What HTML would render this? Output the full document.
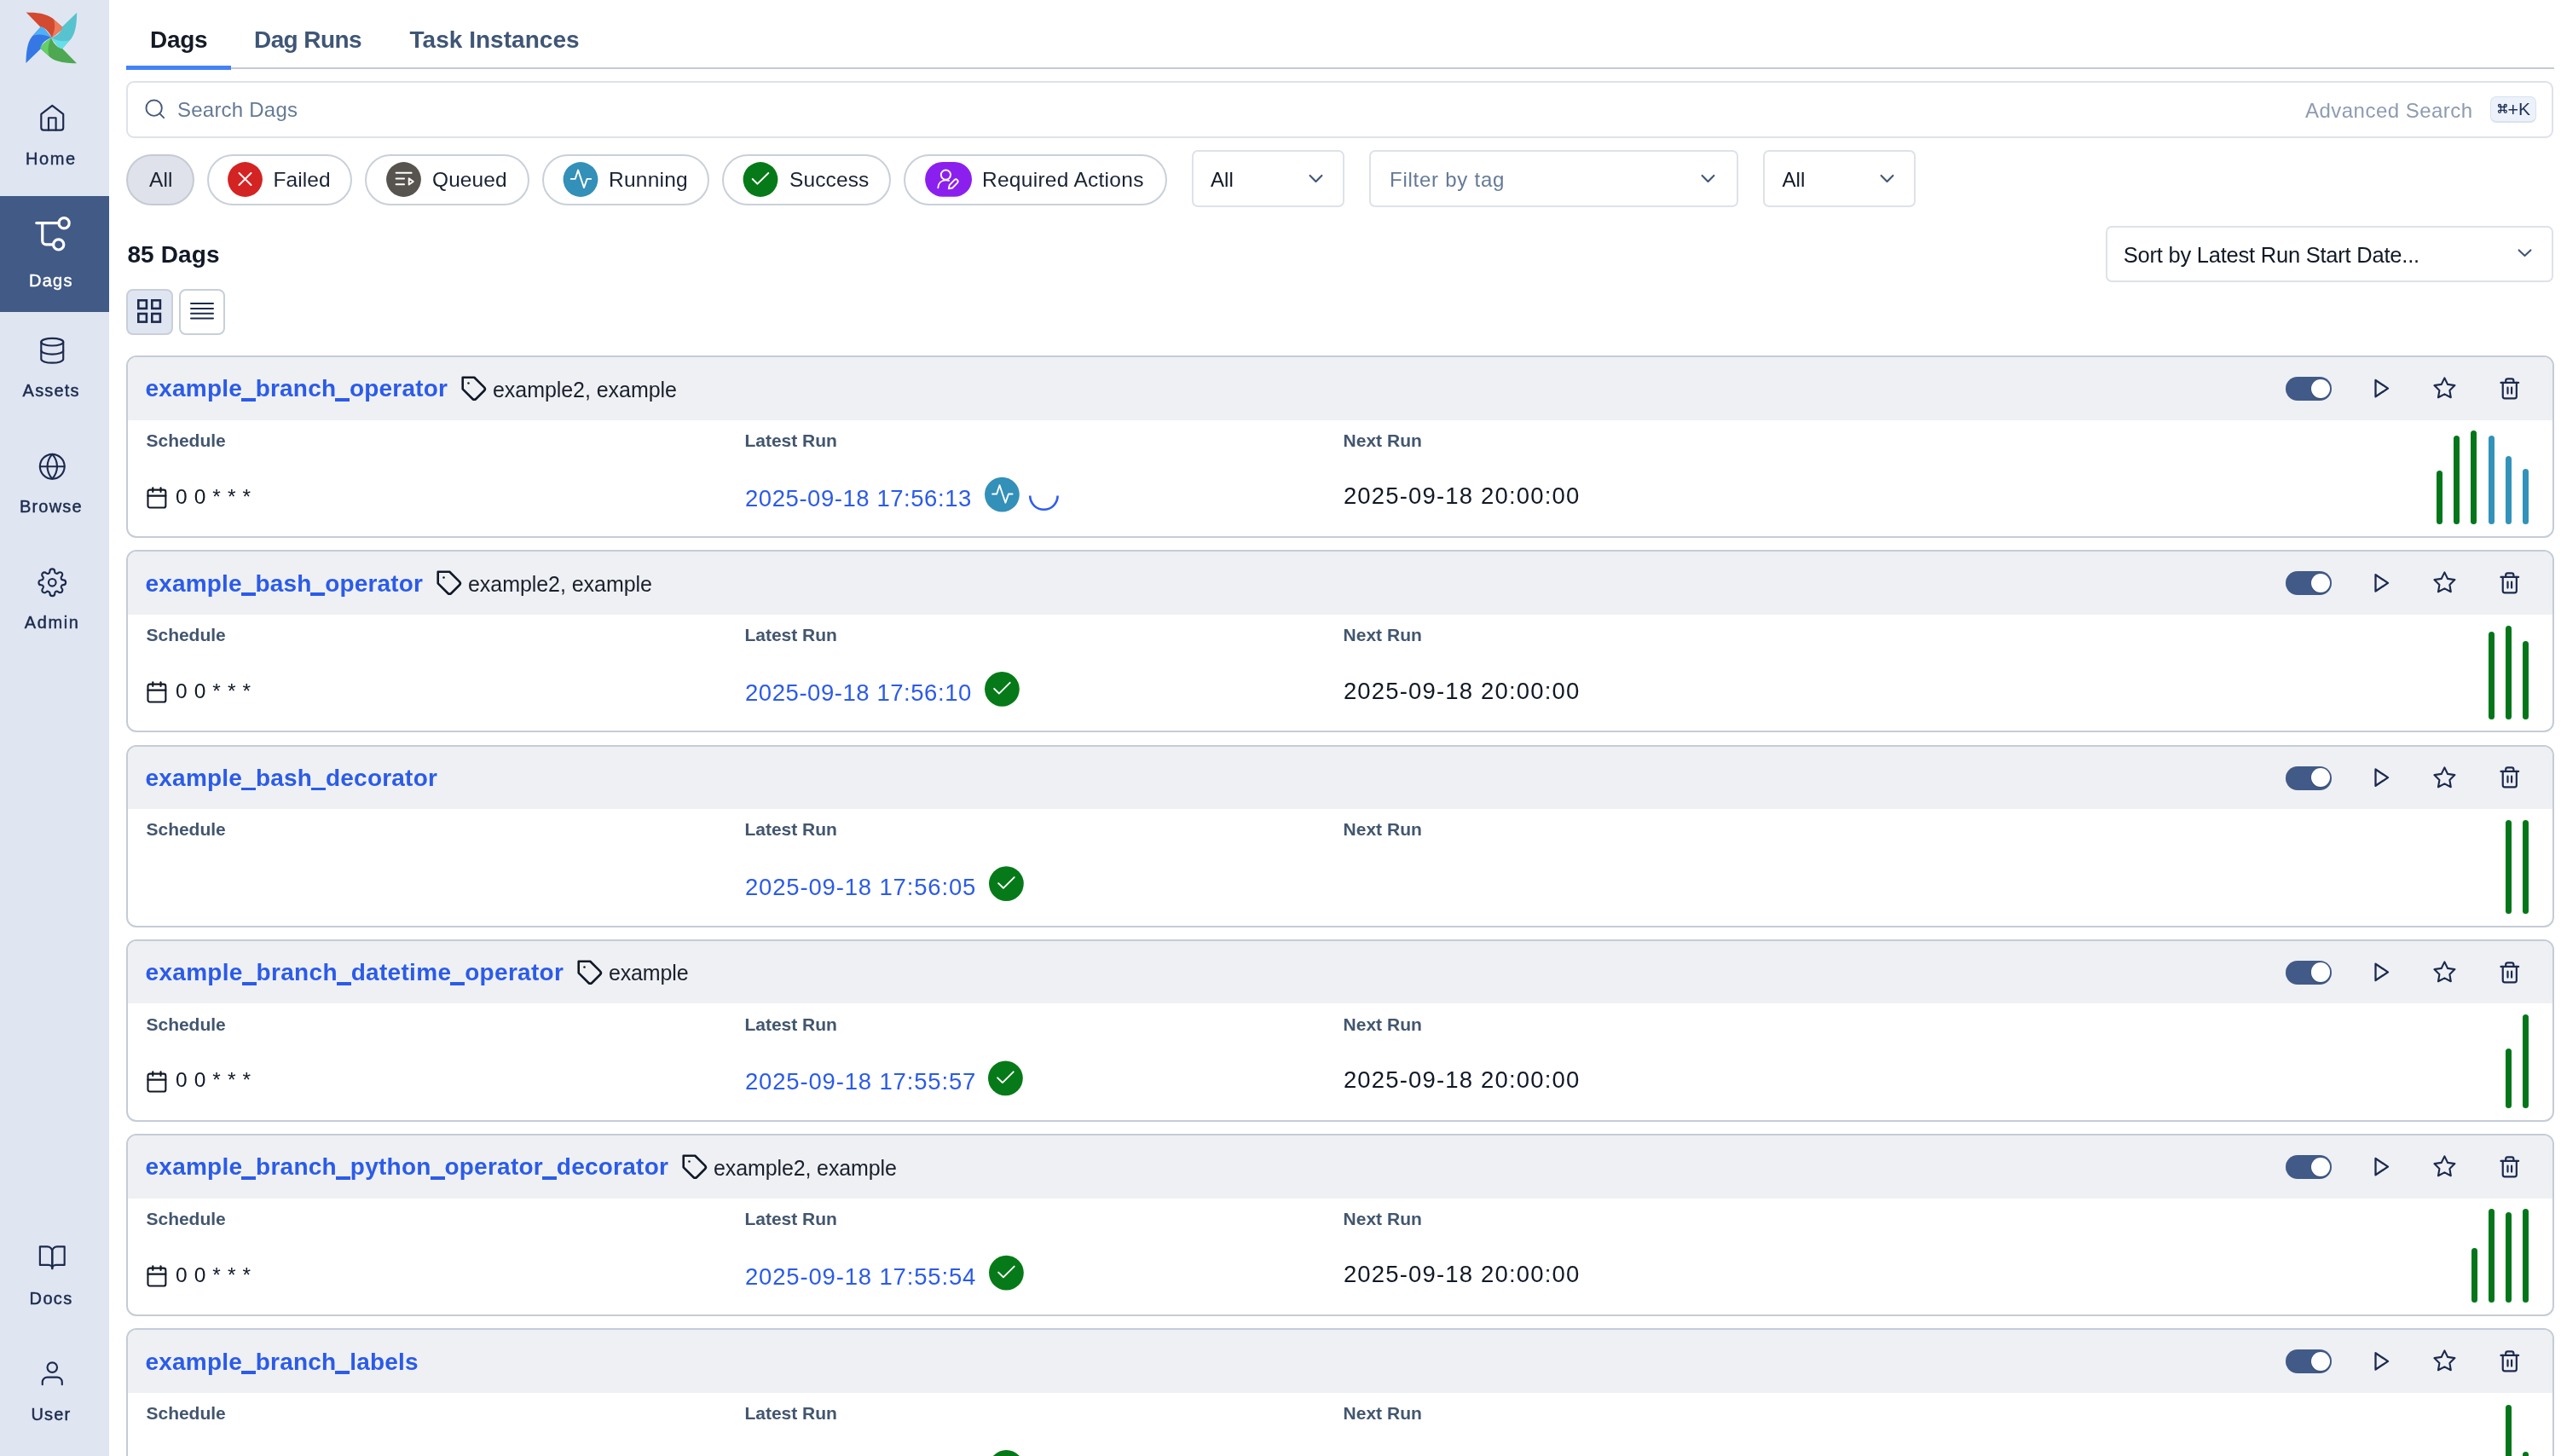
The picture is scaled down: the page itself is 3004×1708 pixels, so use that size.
<!DOCTYPE html>
<html><head><meta charset="utf-8"><style>
html,body{margin:0;padding:0;}
body{width:3004px;height:1708px;overflow:hidden;position:relative;background:#fff;font-family:"Liberation Sans",sans-serif;}
</style></head><body>
<div style="position:absolute;left:0px;top:0px;width:128px;height:1708px;background:#dfe6f2"></div>
<div style="position:absolute;left:0px;top:230px;width:128px;height:135.5px;background:#415a86"></div>
<svg style="position:absolute;left:26px;top:10px;overflow:visible;" width="68" height="68" viewBox="0 0 1456 1456"><g transform="rotate(0 735 735)"><path d="M100,95 C350,100 600,120 760,240 L1005,460 L1000,525 C900,620 800,690 740,735 C700,620 600,500 500,465 L460,465 Z" fill="#d24a2f"/><path d="M790,280 L1005,460 L1000,525 C900,620 800,690 740,735 C820,560 840,420 790,280 Z" fill="#ee7b5c"/></g><g transform="rotate(90 735 735)"><path d="M100,95 C350,100 600,120 760,240 L1005,460 L1000,525 C900,620 800,690 740,735 C700,620 600,500 500,465 L460,465 Z" fill="#57c3cf"/><path d="M790,280 L1005,460 L1000,525 C900,620 800,690 740,735 C820,560 840,420 790,280 Z" fill="#66dfea"/></g><g transform="rotate(180 735 735)"><path d="M100,95 C350,100 600,120 760,240 L1005,460 L1000,525 C900,620 800,690 740,735 C700,620 600,500 500,465 L460,465 Z" fill="#4ea852"/><path d="M790,280 L1005,460 L1000,525 C900,620 800,690 740,735 C820,560 840,420 790,280 Z" fill="#63d067"/></g><g transform="rotate(270 735 735)"><path d="M100,95 C350,100 600,120 760,240 L1005,460 L1000,525 C900,620 800,690 740,735 C700,620 600,500 500,465 L460,465 Z" fill="#3578e5"/><path d="M790,280 L1005,460 L1000,525 C900,620 800,690 740,735 C820,560 840,420 790,280 Z" fill="#4fb1f5"/></g></svg>
<svg style="position:absolute;left:43.9px;top:121.4px;overflow:visible;" width="34.56" height="34.56" viewBox="0 0 24 24"><g fill="none" stroke="#1c2a4d" stroke-width="1.5" stroke-linecap="round" stroke-linejoin="round"><path d="M3 9l9-7 9 7v11a2 2 0 0 1-2 2H5a2 2 0 0 1-2-2z"/><polyline points="9 22 9 12 15 12 15 22"/></g></svg>
<svg style="position:absolute;left:43.9px;top:394.3px;overflow:visible;" width="34.56" height="34.56" viewBox="0 0 24 24"><g fill="none" stroke="#1c2a4d" stroke-width="1.5" stroke-linecap="round" stroke-linejoin="round"><ellipse cx="12" cy="5" rx="9" ry="3"/><path d="M21 12c0 1.66-4 3-9 3s-9-1.34-9-3"/><path d="M3 5v14c0 1.66 4 3 9 3s9-1.34 9-3V5"/></g></svg>
<svg style="position:absolute;left:43.7px;top:529.6px;overflow:visible;" width="34.56" height="34.56" viewBox="0 0 24 24"><g fill="none" stroke="#1c2a4d" stroke-width="1.5" stroke-linecap="round" stroke-linejoin="round"><circle cx="12" cy="12" r="10"/><line x1="2" y1="12" x2="22" y2="12"/><path d="M12 2a15.3 15.3 0 0 1 4 10 15.3 15.3 0 0 1-4 10 15.3 15.3 0 0 1-4-10 15.3 15.3 0 0 1 4-10z"/></g></svg>
<svg style="position:absolute;left:43.7px;top:665.6px;overflow:visible;" width="34.56" height="34.56" viewBox="0 0 24 24"><g fill="none" stroke="#1c2a4d" stroke-width="1.5" stroke-linecap="round" stroke-linejoin="round"><circle cx="12" cy="12" r="3"/><path d="M19.4 15a1.65 1.65 0 0 0 .33 1.82l.06.06a2 2 0 0 1 0 2.83 2 2 0 0 1-2.83 0l-.06-.06a1.650 1.650 0 0 0-1.82-.33 1.65 1.65 0 0 0-1 1.51V21a2 2 0 0 1-2 2 2 2 0 0 1-2-2v-.09A1.65 1.65 0 0 0 9 19.4a1.65 1.65 0 0 0-1.82.33l-.06.06a2 2 0 0 1-2.83 0 2 2 0 0 1 0-2.83l.06-.06a1.65 1.65 0 0 0 .33-1.82 1.65 1.65 0 0 0-1.51-1H3a2 2 0 0 1-2-2 2 2 0 0 1 2-2h.09A1.65 1.65 0 0 0 4.6 9a1.65 1.65 0 0 0-.33-1.82l-.06-.06a2 2 0 0 1 0-2.83 2 2 0 0 1 2.83 0l.06.06a1.65 1.65 0 0 0 1.82.33H9a1.65 1.65 0 0 0 1-1.51V3a2 2 0 0 1 2-2 2 2 0 0 1 2 2v.09a1.65 1.65 0 0 0 1 1.51 1.65 1.65 0 0 0 1.82-.33l.06-.06a2 2 0 0 1 2.83 0 2 2 0 0 1 0 2.83l-.06.06a1.65 1.65 0 0 0-.33 1.82V9a1.65 1.65 0 0 0 1.51 1H21a2 2 0 0 1 2 2 2 2 0 0 1-2 2h-.09a1.65 1.65 0 0 0-1.51 1z"/></g></svg>
<svg style="position:absolute;left:43.9px;top:1457.5px;overflow:visible;" width="34.56" height="34.56" viewBox="0 0 24 24"><g fill="none" stroke="#1c2a4d" stroke-width="1.5" stroke-linecap="round" stroke-linejoin="round"><path d="M2 3h6a4 4 0 0 1 4 4v14a3 3 0 0 0-3-3H2z"/><path d="M22 3h-6a4 4 0 0 0-4 4v14a3 3 0 0 1 3-3h7z"/></g></svg>
<svg style="position:absolute;left:43.7px;top:1593.8px;overflow:visible;" width="34.56" height="34.56" viewBox="0 0 24 24"><g fill="none" stroke="#1c2a4d" stroke-width="1.5" stroke-linecap="round" stroke-linejoin="round"><path d="M20 21v-2a4 4 0 0 0-4-4H8a4 4 0 0 0-4 4v2"/><circle cx="12" cy="7" r="4"/></g></svg>
<svg style="position:absolute;left:0px;top:0px;overflow:visible;" width="128" height="400" viewBox="0 0 128 400"><g fill="none" stroke="#fff" stroke-width="3.2" stroke-linecap="round"><path d="M42.8 261.6 H69"/><path d="M49.75 261.6 V282.5 a4.3 4.3 0 0 0 4.3 4.3 H62.6"/><circle cx="75.1" cy="261.75" r="6.1"/><circle cx="68.7" cy="286.9" r="6.1"/></g></svg>
<div style="position:absolute;left:148px;top:79px;width:2848px;height:2px;background:#c5cbd4"></div>
<div style="position:absolute;left:148px;top:77px;width:123px;height:5px;background:#4682f7"></div>
<div style="position:absolute;left:148px;top:95px;width:2847px;height:67px;box-sizing:border-box;border:2px solid #dde2ea;border-radius:9px;background:#fff"></div>
<svg style="position:absolute;left:168.05px;top:113.95px;overflow:visible;" width="27.6" height="27.6" viewBox="0 0 24 24"><g fill="none" stroke="#46597a" stroke-width="1.65" stroke-linecap="round"><circle cx="11" cy="11" r="8"/><path d="m21 21-4.3-4.3"/></g></svg>
<div style="position:absolute;left:2921px;top:113px;width:53.5px;height:30.8px;box-sizing:border-box;border:1.5px solid #d9e2ef;border-bottom-width:2.5px;border-radius:7px;background:#edf2fa"></div>
<svg style="position:absolute;left:0px;top:0px;overflow:visible;" width="10" height="10" viewBox="0 0 10 10"><g fill="none" stroke="#1f2f57" stroke-width="1.3"><path d="M2932.0 125.5 H2938.8 M2932.0 129.3 H2938.8 M2933.5 124.0 V130.8 M2937.3 124.0 V130.8"/><circle cx="2932.0" cy="124.0" r="1.5"/><circle cx="2932.0" cy="130.8" r="1.5"/><circle cx="2938.8" cy="124.0" r="1.5"/><circle cx="2938.8" cy="130.8" r="1.5"/></g></svg>
<div style="position:absolute;left:148px;top:180.5px;width:79.5px;height:60px;box-sizing:border-box;border:2px solid #c5cad3;border-radius:30px;background:#dfe2ea"></div>
<div style="position:absolute;left:242.5px;top:180.5px;width:170.5px;height:60px;box-sizing:border-box;border:2px solid #c9d0da;border-radius:30px;background:#fff"></div>
<div style="position:absolute;left:427.5px;top:180.5px;width:193.0px;height:60px;box-sizing:border-box;border:2px solid #c9d0da;border-radius:30px;background:#fff"></div>
<div style="position:absolute;left:635.5px;top:180.5px;width:196.0px;height:60px;box-sizing:border-box;border:2px solid #c9d0da;border-radius:30px;background:#fff"></div>
<div style="position:absolute;left:846.5px;top:180.5px;width:198.5px;height:60px;box-sizing:border-box;border:2px solid #c9d0da;border-radius:30px;background:#fff"></div>
<div style="position:absolute;left:1059.5px;top:180.5px;width:309.5px;height:60px;box-sizing:border-box;border:2px solid #c9d0da;border-radius:30px;background:#fff"></div>
<svg style="position:absolute;left:0px;top:0px;overflow:visible;" width="10" height="10" viewBox="0 0 10 10"><circle cx="287.5" cy="210.5" r="20.4" fill="#d42323"/><g fill="none" stroke="#fff" stroke-width="1.9" stroke-linecap="round" stroke-linejoin="round"><path d="M280.5 203.0 L294.5 217.0 M294.5 203.0 L280.5 217.0"/></g></svg>
<svg style="position:absolute;left:0px;top:0px;overflow:visible;" width="10" height="10" viewBox="0 0 10 10"><circle cx="473.5" cy="210.5" r="20.4" fill="#57534e"/><g fill="none" stroke="#fff" stroke-width="1.9" stroke-linecap="round" stroke-linejoin="round"><path d="M464.6 202.8 H482.7 M464.6 209.5 H474.1 M464.6 216.2 H474.1"/><path d="M479.7 209.3 L484.8 212.95 L479.7 216.6 Z"/></g></svg>
<svg style="position:absolute;left:0px;top:0px;overflow:visible;" width="10" height="10" viewBox="0 0 10 10"><circle cx="681" cy="210.5" r="20.4" fill="#3390b8"/><g fill="none" stroke="#fff" stroke-width="1.9" stroke-linecap="round" stroke-linejoin="round"><path d="M669.7 209.9 H674.7 L678.1 199.6 L685 220.1 L688.6 209.9 H693.2"/></g></svg>
<svg style="position:absolute;left:0px;top:0px;overflow:visible;" width="10" height="10" viewBox="0 0 10 10"><circle cx="892" cy="210.5" r="20.4" fill="#067a18"/><g fill="none" stroke="#fff" stroke-width="1.9" stroke-linecap="round" stroke-linejoin="round"><path d="M882.7 210.0 L888.5 215.7 L901.3 203.0"/></g></svg>
<svg style="position:absolute;left:0px;top:0px;overflow:visible;" width="10" height="10" viewBox="0 0 10 10"><rect x="1085.1" y="190" width="54.9" height="40.8" rx="20.4" fill="#8b20ee"/><g fill="none" stroke="#fff" stroke-width="1.9" stroke-linecap="round" stroke-linejoin="round"><circle cx="1109.4" cy="205.1" r="5.6"/><path d="M1100.3 220.3 C1100.6 214.5 1104.5 211.4 1109.5 211.4 C1111 211.4 1112 211.6 1113 211.9"/><path d="M1112.8 221.4 L1113.7 217.1 L1119.5 211.2 A2.4 2.4 0 0 1 1122.9 214.6 L1117.1 220.5 Z"/></g></svg>
<div style="position:absolute;left:1397.5px;top:176px;width:179.5px;height:67px;box-sizing:border-box;border:2px solid #dde2ea;border-radius:7px;background:#fff"></div>
<svg style="position:absolute;left:0px;top:0px;overflow:visible;" width="10" height="10" viewBox="0 0 10 10"><path d="M1536.6 205.9 L1543.5 212.9 L1550.4 205.9" fill="none" stroke="#3f5575" stroke-width="2.1" stroke-linecap="round" stroke-linejoin="round"/></svg>
<div style="position:absolute;left:1605.5px;top:176px;width:433.29999999999995px;height:67px;box-sizing:border-box;border:2px solid #dde2ea;border-radius:7px;background:#fff"></div>
<svg style="position:absolute;left:0px;top:0px;overflow:visible;" width="10" height="10" viewBox="0 0 10 10"><path d="M1996.6 205.9 L2003.5 212.9 L2010.4 205.9" fill="none" stroke="#3f5575" stroke-width="2.1" stroke-linecap="round" stroke-linejoin="round"/></svg>
<div style="position:absolute;left:2067.6px;top:176px;width:179.4000000000001px;height:67px;box-sizing:border-box;border:2px solid #dde2ea;border-radius:7px;background:#fff"></div>
<svg style="position:absolute;left:0px;top:0px;overflow:visible;" width="10" height="10" viewBox="0 0 10 10"><path d="M2206.6 205.9 L2213.5 212.9 L2220.4 205.9" fill="none" stroke="#3f5575" stroke-width="2.1" stroke-linecap="round" stroke-linejoin="round"/></svg>
<div style="position:absolute;left:2469.7px;top:264.8px;width:525.3000000000002px;height:66.09999999999997px;box-sizing:border-box;border:2px solid #dde2ea;border-radius:7px;background:#fff"></div>
<svg style="position:absolute;left:0px;top:0px;overflow:visible;" width="10" height="10" viewBox="0 0 10 10"><path d="M2954.6 293.4 L2961.5 299.9 L2968.4 293.4" fill="none" stroke="#3f5575" stroke-width="2.1" stroke-linecap="round" stroke-linejoin="round"/></svg>
<div style="position:absolute;left:148.25px;top:339.4px;width:54.25px;height:54px;box-sizing:border-box;border:2px solid #c8cfd9;border-radius:8px;background:#dfe6f2"></div>
<div style="position:absolute;left:210.25px;top:339.4px;width:53.5px;height:54px;box-sizing:border-box;border:2px solid #c8cfd9;border-radius:8px;background:#fff"></div>
<svg style="position:absolute;left:0px;top:0px;overflow:visible;" width="10" height="10" viewBox="0 0 10 10"><g fill="none" stroke="#1c2a4d" stroke-width="2.6"><rect x="162.3" y="352.3" width="9.6" height="9.6"/><rect x="178.3" y="352.3" width="9.6" height="9.6"/><rect x="162.3" y="368" width="9.6" height="9.6"/><rect x="178.3" y="368" width="9.6" height="9.6"/></g><g stroke="#1c2a4d" stroke-width="2" stroke-linecap="round"><path d="M224 356 H250 M224 362 H250 M224 367.8 H250 M224 373.5 H250"/></g></svg>
<div style="position:absolute;left:148px;top:417.0px;width:2847.5px;height:214px;box-sizing:border-box;border:2px solid #c5ccd6;border-radius:12px;background:#fff;overflow:hidden"></div>
<div style="position:absolute;left:150px;top:419.0px;width:2843.5px;height:73.6px;background:#eef0f4;border-radius:10px 10px 0 0"></div>
<svg style="position:absolute;left:540px;top:439.8px;overflow:visible;" width="32.64" height="32.64" viewBox="0 0 24 24"><g fill="none" stroke="#111827" stroke-width="1.9" stroke-linecap="round" stroke-linejoin="round"><path d="M20.59 13.41l-7.17 7.17a2 2 0 0 1-2.83 0L2 12V2h10l8.59 8.59a2 2 0 0 1 0 2.82z"/><line x1="7" y1="7" x2="7.01" y2="7"/></g></svg>
<div style="position:absolute;left:2680.8px;top:442.0px;width:54.2px;height:28px;border-radius:14px;background:#415a87"></div>
<div style="position:absolute;left:2710.7px;top:444.5px;width:22.3px;height:22.3px;border-radius:50%;background:#fff;box-shadow:0 1px 2px rgba(0,0,0,.15)"></div>
<svg style="position:absolute;left:0px;top:0px;overflow:visible;" width="10" height="10" viewBox="0 0 10 10"><path d="M2786.5 446.0 L2801 455.6 L2786.5 465.3 Z" fill="none" stroke="#1c2a4d" stroke-width="2.3" stroke-linejoin="round"/></svg>
<svg style="position:absolute;left:2853.1px;top:441.2px;overflow:visible;" width="28.799999999999997" height="28.799999999999997" viewBox="0 0 24 24"><g fill="none" stroke="#1c2a4d" stroke-width="1.75" stroke-linecap="round" stroke-linejoin="round"><polygon points="12 2 15.09 8.26 22 9.27 17 14.14 18.18 21.02 12 17.77 5.82 21.02 7 14.14 2 9.27 8.91 8.26 12 2"/></g></svg>
<svg style="position:absolute;left:2929.7px;top:441.8px;overflow:visible;" width="27.599999999999998" height="27.599999999999998" viewBox="0 0 24 24"><g fill="none" stroke="#1c2a4d" stroke-width="1.9" stroke-linecap="round" stroke-linejoin="round"><path d="M3 6h18"/><path d="M19 6v14a2 2 0 0 1-2 2H7a2 2 0 0 1-2-2V6"/><path d="M8 6V4a2 2 0 0 1 2-2h4a2 2 0 0 1 2 2v2"/><path d="M10 11v6"/><path d="M14 11v6"/></g></svg>
<svg style="position:absolute;left:170.1px;top:570.2px;overflow:visible;" width="27.839999999999996" height="27.839999999999996" viewBox="0 0 24 24"><g fill="none" stroke="#111827" stroke-width="1.8" stroke-linecap="round" stroke-linejoin="round"><path d="M8 2v4"/><path d="M16 2v4"/><rect width="18" height="18" x="3" y="4" rx="2"/><path d="M3 10h18"/></g></svg>
<svg style="position:absolute;left:0px;top:0px;overflow:visible;" width="10" height="10" viewBox="0 0 10 10"><circle cx="1175.4" cy="580.1" r="20.4" fill="#3390b8"/><g fill="none" stroke="#fff" stroke-width="1.9" stroke-linecap="round" stroke-linejoin="round"><path d="M1164.1000000000001 579.5 H1169.1000000000001 L1172.5 569.2 L1179.4 589.7 L1183.0 579.5 H1187.6000000000001"/></g></svg>
<svg style="position:absolute;left:0px;top:0px;overflow:visible;" width="10" height="10" viewBox="0 0 10 10"><path d="M1208.2 581.6 A16 16 0 0 0 1240.6000000000001 581.6" fill="none" stroke="#2f5cf0" stroke-width="2.6"/></svg>
<div style="position:absolute;left:2858.0px;top:552.4px;width:7px;height:63px;border-radius:3.5px;background:#04761a"></div>
<div style="position:absolute;left:2877.9px;top:511.4px;width:7px;height:104px;border-radius:3.5px;background:#04761a"></div>
<div style="position:absolute;left:2898.3px;top:505.4px;width:7px;height:110px;border-radius:3.5px;background:#04761a"></div>
<div style="position:absolute;left:2918.8px;top:511.4px;width:7px;height:104px;border-radius:3.5px;background:#3392ba"></div>
<div style="position:absolute;left:2938.7px;top:535.4px;width:7px;height:80px;border-radius:3.5px;background:#3392ba"></div>
<div style="position:absolute;left:2959.4px;top:550.4px;width:7px;height:65px;border-radius:3.5px;background:#3392ba"></div>
<div style="position:absolute;left:148px;top:645.25px;width:2847.5px;height:214px;box-sizing:border-box;border:2px solid #c5ccd6;border-radius:12px;background:#fff;overflow:hidden"></div>
<div style="position:absolute;left:150px;top:647.25px;width:2843.5px;height:73.6px;background:#eef0f4;border-radius:10px 10px 0 0"></div>
<svg style="position:absolute;left:511px;top:668.05px;overflow:visible;" width="32.64" height="32.64" viewBox="0 0 24 24"><g fill="none" stroke="#111827" stroke-width="1.9" stroke-linecap="round" stroke-linejoin="round"><path d="M20.59 13.41l-7.17 7.17a2 2 0 0 1-2.83 0L2 12V2h10l8.59 8.59a2 2 0 0 1 0 2.82z"/><line x1="7" y1="7" x2="7.01" y2="7"/></g></svg>
<div style="position:absolute;left:2680.8px;top:670.25px;width:54.2px;height:28px;border-radius:14px;background:#415a87"></div>
<div style="position:absolute;left:2710.7px;top:672.75px;width:22.3px;height:22.3px;border-radius:50%;background:#fff;box-shadow:0 1px 2px rgba(0,0,0,.15)"></div>
<svg style="position:absolute;left:0px;top:0px;overflow:visible;" width="10" height="10" viewBox="0 0 10 10"><path d="M2786.5 674.25 L2801 683.85 L2786.5 693.55 Z" fill="none" stroke="#1c2a4d" stroke-width="2.3" stroke-linejoin="round"/></svg>
<svg style="position:absolute;left:2853.1px;top:669.45px;overflow:visible;" width="28.799999999999997" height="28.799999999999997" viewBox="0 0 24 24"><g fill="none" stroke="#1c2a4d" stroke-width="1.75" stroke-linecap="round" stroke-linejoin="round"><polygon points="12 2 15.09 8.26 22 9.27 17 14.14 18.18 21.02 12 17.77 5.82 21.02 7 14.14 2 9.27 8.91 8.26 12 2"/></g></svg>
<svg style="position:absolute;left:2929.7px;top:670.05px;overflow:visible;" width="27.599999999999998" height="27.599999999999998" viewBox="0 0 24 24"><g fill="none" stroke="#1c2a4d" stroke-width="1.9" stroke-linecap="round" stroke-linejoin="round"><path d="M3 6h18"/><path d="M19 6v14a2 2 0 0 1-2 2H7a2 2 0 0 1-2-2V6"/><path d="M8 6V4a2 2 0 0 1 2-2h4a2 2 0 0 1 2 2v2"/><path d="M10 11v6"/><path d="M14 11v6"/></g></svg>
<svg style="position:absolute;left:170.1px;top:798.45px;overflow:visible;" width="27.839999999999996" height="27.839999999999996" viewBox="0 0 24 24"><g fill="none" stroke="#111827" stroke-width="1.8" stroke-linecap="round" stroke-linejoin="round"><path d="M8 2v4"/><path d="M16 2v4"/><rect width="18" height="18" x="3" y="4" rx="2"/><path d="M3 10h18"/></g></svg>
<svg style="position:absolute;left:0px;top:0px;overflow:visible;" width="10" height="10" viewBox="0 0 10 10"><circle cx="1175.4" cy="808.35" r="20.4" fill="#067a18"/><g fill="none" stroke="#fff" stroke-width="1.9" stroke-linecap="round" stroke-linejoin="round"><path d="M1166.1000000000001 807.85 L1171.9 813.5500000000001 L1184.7 800.85"/></g></svg>
<div style="position:absolute;left:2919.0px;top:740.65px;width:7px;height:103px;border-radius:3.5px;background:#04761a"></div>
<div style="position:absolute;left:2938.9px;top:733.65px;width:7px;height:110px;border-radius:3.5px;background:#04761a"></div>
<div style="position:absolute;left:2959.4px;top:751.65px;width:7px;height:92px;border-radius:3.5px;background:#04761a"></div>
<div style="position:absolute;left:148px;top:873.5px;width:2847.5px;height:214px;box-sizing:border-box;border:2px solid #c5ccd6;border-radius:12px;background:#fff;overflow:hidden"></div>
<div style="position:absolute;left:150px;top:875.5px;width:2843.5px;height:73.6px;background:#eef0f4;border-radius:10px 10px 0 0"></div>
<div style="position:absolute;left:2680.8px;top:898.5px;width:54.2px;height:28px;border-radius:14px;background:#415a87"></div>
<div style="position:absolute;left:2710.7px;top:901.0px;width:22.3px;height:22.3px;border-radius:50%;background:#fff;box-shadow:0 1px 2px rgba(0,0,0,.15)"></div>
<svg style="position:absolute;left:0px;top:0px;overflow:visible;" width="10" height="10" viewBox="0 0 10 10"><path d="M2786.5 902.5 L2801 912.1 L2786.5 921.8 Z" fill="none" stroke="#1c2a4d" stroke-width="2.3" stroke-linejoin="round"/></svg>
<svg style="position:absolute;left:2853.1px;top:897.7px;overflow:visible;" width="28.799999999999997" height="28.799999999999997" viewBox="0 0 24 24"><g fill="none" stroke="#1c2a4d" stroke-width="1.75" stroke-linecap="round" stroke-linejoin="round"><polygon points="12 2 15.09 8.26 22 9.27 17 14.14 18.18 21.02 12 17.77 5.82 21.02 7 14.14 2 9.27 8.91 8.26 12 2"/></g></svg>
<svg style="position:absolute;left:2929.7px;top:898.3px;overflow:visible;" width="27.599999999999998" height="27.599999999999998" viewBox="0 0 24 24"><g fill="none" stroke="#1c2a4d" stroke-width="1.9" stroke-linecap="round" stroke-linejoin="round"><path d="M3 6h18"/><path d="M19 6v14a2 2 0 0 1-2 2H7a2 2 0 0 1-2-2V6"/><path d="M8 6V4a2 2 0 0 1 2-2h4a2 2 0 0 1 2 2v2"/><path d="M10 11v6"/><path d="M14 11v6"/></g></svg>
<svg style="position:absolute;left:0px;top:0px;overflow:visible;" width="10" height="10" viewBox="0 0 10 10"><circle cx="1180.4" cy="1036.6" r="20.4" fill="#067a18"/><g fill="none" stroke="#fff" stroke-width="1.9" stroke-linecap="round" stroke-linejoin="round"><path d="M1171.1000000000001 1036.1 L1176.9 1041.8 L1189.7 1029.1"/></g></svg>
<div style="position:absolute;left:2938.9px;top:961.9000000000001px;width:7px;height:110px;border-radius:3.5px;background:#04761a"></div>
<div style="position:absolute;left:2959.4px;top:961.9000000000001px;width:7px;height:110px;border-radius:3.5px;background:#04761a"></div>
<div style="position:absolute;left:148px;top:1101.75px;width:2847.5px;height:214px;box-sizing:border-box;border:2px solid #c5ccd6;border-radius:12px;background:#fff;overflow:hidden"></div>
<div style="position:absolute;left:150px;top:1103.75px;width:2843.5px;height:73.6px;background:#eef0f4;border-radius:10px 10px 0 0"></div>
<svg style="position:absolute;left:676px;top:1124.55px;overflow:visible;" width="32.64" height="32.64" viewBox="0 0 24 24"><g fill="none" stroke="#111827" stroke-width="1.9" stroke-linecap="round" stroke-linejoin="round"><path d="M20.59 13.41l-7.17 7.17a2 2 0 0 1-2.83 0L2 12V2h10l8.59 8.59a2 2 0 0 1 0 2.82z"/><line x1="7" y1="7" x2="7.01" y2="7"/></g></svg>
<div style="position:absolute;left:2680.8px;top:1126.75px;width:54.2px;height:28px;border-radius:14px;background:#415a87"></div>
<div style="position:absolute;left:2710.7px;top:1129.25px;width:22.3px;height:22.3px;border-radius:50%;background:#fff;box-shadow:0 1px 2px rgba(0,0,0,.15)"></div>
<svg style="position:absolute;left:0px;top:0px;overflow:visible;" width="10" height="10" viewBox="0 0 10 10"><path d="M2786.5 1130.75 L2801 1140.35 L2786.5 1150.05 Z" fill="none" stroke="#1c2a4d" stroke-width="2.3" stroke-linejoin="round"/></svg>
<svg style="position:absolute;left:2853.1px;top:1125.95px;overflow:visible;" width="28.799999999999997" height="28.799999999999997" viewBox="0 0 24 24"><g fill="none" stroke="#1c2a4d" stroke-width="1.75" stroke-linecap="round" stroke-linejoin="round"><polygon points="12 2 15.09 8.26 22 9.27 17 14.14 18.18 21.02 12 17.77 5.82 21.02 7 14.14 2 9.27 8.91 8.26 12 2"/></g></svg>
<svg style="position:absolute;left:2929.7px;top:1126.55px;overflow:visible;" width="27.599999999999998" height="27.599999999999998" viewBox="0 0 24 24"><g fill="none" stroke="#1c2a4d" stroke-width="1.9" stroke-linecap="round" stroke-linejoin="round"><path d="M3 6h18"/><path d="M19 6v14a2 2 0 0 1-2 2H7a2 2 0 0 1-2-2V6"/><path d="M8 6V4a2 2 0 0 1 2-2h4a2 2 0 0 1 2 2v2"/><path d="M10 11v6"/><path d="M14 11v6"/></g></svg>
<svg style="position:absolute;left:170.1px;top:1254.95px;overflow:visible;" width="27.839999999999996" height="27.839999999999996" viewBox="0 0 24 24"><g fill="none" stroke="#111827" stroke-width="1.8" stroke-linecap="round" stroke-linejoin="round"><path d="M8 2v4"/><path d="M16 2v4"/><rect width="18" height="18" x="3" y="4" rx="2"/><path d="M3 10h18"/></g></svg>
<svg style="position:absolute;left:0px;top:0px;overflow:visible;" width="10" height="10" viewBox="0 0 10 10"><circle cx="1179.4" cy="1264.85" r="20.4" fill="#067a18"/><g fill="none" stroke="#fff" stroke-width="1.9" stroke-linecap="round" stroke-linejoin="round"><path d="M1170.1000000000001 1264.35 L1175.9 1270.05 L1188.7 1257.35"/></g></svg>
<div style="position:absolute;left:2938.9px;top:1229.65px;width:7px;height:70.5px;border-radius:3.5px;background:#04761a"></div>
<div style="position:absolute;left:2959.4px;top:1190.15px;width:7px;height:110px;border-radius:3.5px;background:#04761a"></div>
<div style="position:absolute;left:148px;top:1330.0px;width:2847.5px;height:214px;box-sizing:border-box;border:2px solid #c5ccd6;border-radius:12px;background:#fff;overflow:hidden"></div>
<div style="position:absolute;left:150px;top:1332.0px;width:2843.5px;height:73.6px;background:#eef0f4;border-radius:10px 10px 0 0"></div>
<svg style="position:absolute;left:799px;top:1352.8px;overflow:visible;" width="32.64" height="32.64" viewBox="0 0 24 24"><g fill="none" stroke="#111827" stroke-width="1.9" stroke-linecap="round" stroke-linejoin="round"><path d="M20.59 13.41l-7.17 7.17a2 2 0 0 1-2.83 0L2 12V2h10l8.59 8.59a2 2 0 0 1 0 2.82z"/><line x1="7" y1="7" x2="7.01" y2="7"/></g></svg>
<div style="position:absolute;left:2680.8px;top:1355.0px;width:54.2px;height:28px;border-radius:14px;background:#415a87"></div>
<div style="position:absolute;left:2710.7px;top:1357.5px;width:22.3px;height:22.3px;border-radius:50%;background:#fff;box-shadow:0 1px 2px rgba(0,0,0,.15)"></div>
<svg style="position:absolute;left:0px;top:0px;overflow:visible;" width="10" height="10" viewBox="0 0 10 10"><path d="M2786.5 1359.0 L2801 1368.6 L2786.5 1378.3 Z" fill="none" stroke="#1c2a4d" stroke-width="2.3" stroke-linejoin="round"/></svg>
<svg style="position:absolute;left:2853.1px;top:1354.2px;overflow:visible;" width="28.799999999999997" height="28.799999999999997" viewBox="0 0 24 24"><g fill="none" stroke="#1c2a4d" stroke-width="1.75" stroke-linecap="round" stroke-linejoin="round"><polygon points="12 2 15.09 8.26 22 9.27 17 14.14 18.18 21.02 12 17.77 5.82 21.02 7 14.14 2 9.27 8.91 8.26 12 2"/></g></svg>
<svg style="position:absolute;left:2929.7px;top:1354.8px;overflow:visible;" width="27.599999999999998" height="27.599999999999998" viewBox="0 0 24 24"><g fill="none" stroke="#1c2a4d" stroke-width="1.9" stroke-linecap="round" stroke-linejoin="round"><path d="M3 6h18"/><path d="M19 6v14a2 2 0 0 1-2 2H7a2 2 0 0 1-2-2V6"/><path d="M8 6V4a2 2 0 0 1 2-2h4a2 2 0 0 1 2 2v2"/><path d="M10 11v6"/><path d="M14 11v6"/></g></svg>
<svg style="position:absolute;left:170.1px;top:1483.2px;overflow:visible;" width="27.839999999999996" height="27.839999999999996" viewBox="0 0 24 24"><g fill="none" stroke="#111827" stroke-width="1.8" stroke-linecap="round" stroke-linejoin="round"><path d="M8 2v4"/><path d="M16 2v4"/><rect width="18" height="18" x="3" y="4" rx="2"/><path d="M3 10h18"/></g></svg>
<svg style="position:absolute;left:0px;top:0px;overflow:visible;" width="10" height="10" viewBox="0 0 10 10"><circle cx="1180.4" cy="1493.1" r="20.4" fill="#067a18"/><g fill="none" stroke="#fff" stroke-width="1.9" stroke-linecap="round" stroke-linejoin="round"><path d="M1171.1000000000001 1492.6 L1176.9 1498.3 L1189.7 1485.6"/></g></svg>
<div style="position:absolute;left:2898.5px;top:1464.4px;width:7px;height:64px;border-radius:3.5px;background:#04761a"></div>
<div style="position:absolute;left:2919.0px;top:1418.4px;width:7px;height:110px;border-radius:3.5px;background:#04761a"></div>
<div style="position:absolute;left:2938.9px;top:1422.4px;width:7px;height:106px;border-radius:3.5px;background:#04761a"></div>
<div style="position:absolute;left:2959.4px;top:1418.4px;width:7px;height:110px;border-radius:3.5px;background:#04761a"></div>
<div style="position:absolute;left:148px;top:1558.25px;width:2847.5px;height:214px;box-sizing:border-box;border:2px solid #c5ccd6;border-radius:12px;background:#fff;overflow:hidden"></div>
<div style="position:absolute;left:150px;top:1560.25px;width:2843.5px;height:73.6px;background:#eef0f4;border-radius:10px 10px 0 0"></div>
<div style="position:absolute;left:2680.8px;top:1583.25px;width:54.2px;height:28px;border-radius:14px;background:#415a87"></div>
<div style="position:absolute;left:2710.7px;top:1585.75px;width:22.3px;height:22.3px;border-radius:50%;background:#fff;box-shadow:0 1px 2px rgba(0,0,0,.15)"></div>
<svg style="position:absolute;left:0px;top:0px;overflow:visible;" width="10" height="10" viewBox="0 0 10 10"><path d="M2786.5 1587.25 L2801 1596.85 L2786.5 1606.55 Z" fill="none" stroke="#1c2a4d" stroke-width="2.3" stroke-linejoin="round"/></svg>
<svg style="position:absolute;left:2853.1px;top:1582.45px;overflow:visible;" width="28.799999999999997" height="28.799999999999997" viewBox="0 0 24 24"><g fill="none" stroke="#1c2a4d" stroke-width="1.75" stroke-linecap="round" stroke-linejoin="round"><polygon points="12 2 15.09 8.26 22 9.27 17 14.14 18.18 21.02 12 17.77 5.82 21.02 7 14.14 2 9.27 8.91 8.26 12 2"/></g></svg>
<svg style="position:absolute;left:2929.7px;top:1583.05px;overflow:visible;" width="27.599999999999998" height="27.599999999999998" viewBox="0 0 24 24"><g fill="none" stroke="#1c2a4d" stroke-width="1.9" stroke-linecap="round" stroke-linejoin="round"><path d="M3 6h18"/><path d="M19 6v14a2 2 0 0 1-2 2H7a2 2 0 0 1-2-2V6"/><path d="M8 6V4a2 2 0 0 1 2-2h4a2 2 0 0 1 2 2v2"/><path d="M10 11v6"/><path d="M14 11v6"/></g></svg>
<svg style="position:absolute;left:0px;top:0px;overflow:visible;" width="10" height="10" viewBox="0 0 10 10"><circle cx="1180.4" cy="1721.35" r="20.4" fill="#067a18"/><g fill="none" stroke="#fff" stroke-width="1.9" stroke-linecap="round" stroke-linejoin="round"><path d="M1171.1000000000001 1720.85 L1176.9 1726.55 L1189.7 1713.85"/></g></svg>
<div style="position:absolute;left:2938.9px;top:1648.15px;width:7px;height:108.5px;border-radius:3.5px;background:#04761a"></div>
<div style="position:absolute;left:2959.4px;top:1703.15px;width:7px;height:53.5px;border-radius:3.5px;background:#04761a"></div>
<div style="position:absolute;left:0;top:0;width:3004px;height:1708px;will-change:transform">
<span style="position:absolute;left:30.00px;top:186.32px;font-size:20px;font-weight:normal;color:#1c2a4d;letter-spacing:1.591px;line-height:0;white-space:nowrap;-webkit-text-stroke:0.45px #1c2a4d">Home</span>
<span style="position:absolute;left:34.00px;top:328.82px;font-size:20px;font-weight:normal;color:#ffffff;letter-spacing:1.270px;line-height:0;white-space:nowrap;-webkit-text-stroke:0.45px #ffffff">Dags</span>
<span style="position:absolute;left:26.60px;top:458.27px;font-size:20px;font-weight:normal;color:#1c2a4d;letter-spacing:1.196px;line-height:0;white-space:nowrap;-webkit-text-stroke:0.45px #1c2a4d">Assets</span>
<span style="position:absolute;left:22.90px;top:594.07px;font-size:20px;font-weight:normal;color:#1c2a4d;letter-spacing:1.227px;line-height:0;white-space:nowrap;-webkit-text-stroke:0.45px #1c2a4d">Browse</span>
<span style="position:absolute;left:28.80px;top:730.07px;font-size:20px;font-weight:normal;color:#1c2a4d;letter-spacing:1.583px;line-height:0;white-space:nowrap;-webkit-text-stroke:0.45px #1c2a4d">Admin</span>
<span style="position:absolute;left:34.60px;top:1523.07px;font-size:20px;font-weight:normal;color:#1c2a4d;letter-spacing:1.345px;line-height:0;white-space:nowrap;-webkit-text-stroke:0.45px #1c2a4d">Docs</span>
<span style="position:absolute;left:36.50px;top:1659.07px;font-size:20px;font-weight:normal;color:#1c2a4d;letter-spacing:1.145px;line-height:0;white-space:nowrap;-webkit-text-stroke:0.45px #1c2a4d">User</span>
<span style="position:absolute;left:176.00px;top:46.55px;font-size:28px;font-weight:bold;color:#141a26;letter-spacing:-0.299px;line-height:0;white-space:nowrap;">Dags</span>
<span style="position:absolute;left:298.00px;top:46.55px;font-size:28px;font-weight:bold;color:#3f5676;letter-spacing:-0.586px;line-height:0;white-space:nowrap;">Dag Runs</span>
<span style="position:absolute;left:480.50px;top:46.55px;font-size:28px;font-weight:bold;color:#3f5676;letter-spacing:0.029px;line-height:0;white-space:nowrap;">Task Instances</span>
<span style="position:absolute;left:208.00px;top:129.18px;font-size:24px;font-weight:normal;color:#647a96;letter-spacing:0.226px;line-height:0;white-space:nowrap;">Search Dags</span>
<span style="position:absolute;left:2704.00px;top:129.88px;font-size:24px;font-weight:normal;color:#8e9bb0;letter-spacing:0.471px;line-height:0;white-space:nowrap;">Advanced Search</span>
<span style="position:absolute;left:2941.50px;top:128.65px;font-size:21.5px;font-weight:normal;color:#1f2f57;letter-spacing:-0.700px;line-height:0;white-space:nowrap;">+</span>
<span style="position:absolute;left:2953.90px;top:128.32px;font-size:21px;font-weight:normal;color:#1f2f57;letter-spacing:-2.100px;line-height:0;white-space:nowrap;">K</span>
<span style="position:absolute;left:175.00px;top:210.51px;font-size:24.5px;font-weight:normal;color:#1a2233;letter-spacing:0.108px;line-height:0;white-space:nowrap;">All</span>
<span style="position:absolute;left:320.50px;top:210.51px;font-size:24.5px;font-weight:normal;color:#1a2233;letter-spacing:0.079px;line-height:0;white-space:nowrap;">Failed</span>
<span style="position:absolute;left:507.00px;top:210.51px;font-size:24.5px;font-weight:normal;color:#1a2233;letter-spacing:0.088px;line-height:0;white-space:nowrap;">Queued</span>
<span style="position:absolute;left:714.00px;top:210.51px;font-size:24.5px;font-weight:normal;color:#1a2233;letter-spacing:0.227px;line-height:0;white-space:nowrap;">Running</span>
<span style="position:absolute;left:926.00px;top:210.51px;font-size:24.5px;font-weight:normal;color:#1a2233;letter-spacing:0.110px;line-height:0;white-space:nowrap;">Success</span>
<span style="position:absolute;left:1152.00px;top:210.51px;font-size:24.5px;font-weight:normal;color:#1a2233;letter-spacing:0.278px;line-height:0;white-space:nowrap;">Required Actions</span>
<span style="position:absolute;left:1420.00px;top:210.68px;font-size:24px;font-weight:normal;color:#111827;letter-spacing:0.080px;line-height:0;white-space:nowrap;">All</span>
<span style="position:absolute;left:1630.00px;top:210.68px;font-size:24px;font-weight:normal;color:#657a96;letter-spacing:0.747px;line-height:0;white-space:nowrap;">Filter by tag</span>
<span style="position:absolute;left:2090.50px;top:210.68px;font-size:24px;font-weight:normal;color:#111827;letter-spacing:0.080px;line-height:0;white-space:nowrap;">All</span>
<span style="position:absolute;left:149.40px;top:298.70px;font-size:28px;font-weight:bold;color:#111827;letter-spacing:0.130px;line-height:0;white-space:nowrap;">85 Dags</span>
<span style="position:absolute;left:2490.70px;top:298.86px;font-size:25.5px;font-weight:normal;color:#111827;letter-spacing:-0.224px;line-height:0;white-space:nowrap;">Sort by Latest Run Start Date...</span>
<span style="position:absolute;left:170.50px;top:456.40px;font-size:28px;font-weight:bold;color:#2b5be8;letter-spacing:0.194px;line-height:0;white-space:nowrap;">example_branch_operator</span>
<div style="position:absolute;left:282.92px;top:467.20px;width:17.00px;height:3.7px;background:#2b5be8"></div>
<div style="position:absolute;left:393.20px;top:467.20px;width:17.00px;height:3.7px;background:#2b5be8"></div>
<span style="position:absolute;left:578.00px;top:456.64px;font-size:25px;font-weight:normal;color:#1a1f2b;letter-spacing:-0.055px;line-height:0;white-space:nowrap;">example2, example</span>
<span style="position:absolute;left:171.50px;top:516.82px;font-size:21px;font-weight:bold;color:#42566f;letter-spacing:-0.026px;line-height:0;white-space:nowrap;">Schedule</span>
<span style="position:absolute;left:873.50px;top:516.82px;font-size:21px;font-weight:bold;color:#42566f;letter-spacing:-0.020px;line-height:0;white-space:nowrap;">Latest Run</span>
<span style="position:absolute;left:1575.50px;top:516.82px;font-size:21px;font-weight:bold;color:#42566f;letter-spacing:0.022px;line-height:0;white-space:nowrap;">Next Run</span>
<span style="position:absolute;left:206.00px;top:582.51px;font-size:24.5px;font-weight:normal;color:#111827;letter-spacing:0.619px;line-height:0;white-space:nowrap;">0 0 * * *</span>
<span style="position:absolute;left:874.00px;top:584.57px;font-size:27.5px;font-weight:normal;color:#2b5be8;letter-spacing:0.552px;line-height:0;white-space:nowrap;">2025-09-18 17:56:13</span>
<span style="position:absolute;left:1575.90px;top:582.47px;font-size:27.5px;font-weight:normal;color:#111827;letter-spacing:1.169px;line-height:0;white-space:nowrap;">2025-09-18 20:00:00</span>
<span style="position:absolute;left:170.50px;top:684.65px;font-size:28px;font-weight:bold;color:#2b5be8;letter-spacing:0.163px;line-height:0;white-space:nowrap;">example_bash_operator</span>
<div style="position:absolute;left:282.71px;top:695.45px;width:17.00px;height:3.7px;background:#2b5be8"></div>
<div style="position:absolute;left:364.45px;top:695.45px;width:17.00px;height:3.7px;background:#2b5be8"></div>
<span style="position:absolute;left:549.00px;top:684.89px;font-size:25px;font-weight:normal;color:#1a1f2b;letter-spacing:-0.055px;line-height:0;white-space:nowrap;">example2, example</span>
<span style="position:absolute;left:171.50px;top:745.07px;font-size:21px;font-weight:bold;color:#42566f;letter-spacing:-0.026px;line-height:0;white-space:nowrap;">Schedule</span>
<span style="position:absolute;left:873.50px;top:745.07px;font-size:21px;font-weight:bold;color:#42566f;letter-spacing:-0.020px;line-height:0;white-space:nowrap;">Latest Run</span>
<span style="position:absolute;left:1575.50px;top:745.07px;font-size:21px;font-weight:bold;color:#42566f;letter-spacing:0.022px;line-height:0;white-space:nowrap;">Next Run</span>
<span style="position:absolute;left:206.00px;top:810.76px;font-size:24.5px;font-weight:normal;color:#111827;letter-spacing:0.619px;line-height:0;white-space:nowrap;">0 0 * * *</span>
<span style="position:absolute;left:874.00px;top:812.82px;font-size:27.5px;font-weight:normal;color:#2b5be8;letter-spacing:0.552px;line-height:0;white-space:nowrap;">2025-09-18 17:56:10</span>
<span style="position:absolute;left:1575.90px;top:810.72px;font-size:27.5px;font-weight:normal;color:#111827;letter-spacing:1.169px;line-height:0;white-space:nowrap;">2025-09-18 20:00:00</span>
<span style="position:absolute;left:170.50px;top:912.90px;font-size:28px;font-weight:bold;color:#2b5be8;letter-spacing:0.223px;line-height:0;white-space:nowrap;">example_bash_decorator</span>
<div style="position:absolute;left:283.13px;top:923.70px;width:17.00px;height:3.7px;background:#2b5be8"></div>
<div style="position:absolute;left:365.17px;top:923.70px;width:17.00px;height:3.7px;background:#2b5be8"></div>
<span style="position:absolute;left:171.50px;top:973.32px;font-size:21px;font-weight:bold;color:#42566f;letter-spacing:-0.026px;line-height:0;white-space:nowrap;">Schedule</span>
<span style="position:absolute;left:873.50px;top:973.32px;font-size:21px;font-weight:bold;color:#42566f;letter-spacing:-0.020px;line-height:0;white-space:nowrap;">Latest Run</span>
<span style="position:absolute;left:1575.50px;top:973.32px;font-size:21px;font-weight:bold;color:#42566f;letter-spacing:0.022px;line-height:0;white-space:nowrap;">Next Run</span>
<span style="position:absolute;left:874.00px;top:1041.07px;font-size:27.5px;font-weight:normal;color:#2b5be8;letter-spacing:0.830px;line-height:0;white-space:nowrap;">2025-09-18 17:56:05</span>
<span style="position:absolute;left:170.50px;top:1141.15px;font-size:28px;font-weight:bold;color:#2b5be8;letter-spacing:0.308px;line-height:0;white-space:nowrap;">example_branch_datetime_operator</span>
<div style="position:absolute;left:283.72px;top:1151.95px;width:17.00px;height:3.7px;background:#2b5be8"></div>
<div style="position:absolute;left:394.80px;top:1151.95px;width:17.00px;height:3.7px;background:#2b5be8"></div>
<div style="position:absolute;left:528.29px;top:1151.95px;width:17.00px;height:3.7px;background:#2b5be8"></div>
<span style="position:absolute;left:714.00px;top:1141.39px;font-size:25px;font-weight:normal;color:#1a1f2b;letter-spacing:-0.148px;line-height:0;white-space:nowrap;">example</span>
<span style="position:absolute;left:171.50px;top:1201.57px;font-size:21px;font-weight:bold;color:#42566f;letter-spacing:-0.026px;line-height:0;white-space:nowrap;">Schedule</span>
<span style="position:absolute;left:873.50px;top:1201.57px;font-size:21px;font-weight:bold;color:#42566f;letter-spacing:-0.020px;line-height:0;white-space:nowrap;">Latest Run</span>
<span style="position:absolute;left:1575.50px;top:1201.57px;font-size:21px;font-weight:bold;color:#42566f;letter-spacing:0.022px;line-height:0;white-space:nowrap;">Next Run</span>
<span style="position:absolute;left:206.00px;top:1267.26px;font-size:24.5px;font-weight:normal;color:#111827;letter-spacing:0.619px;line-height:0;white-space:nowrap;">0 0 * * *</span>
<span style="position:absolute;left:874.00px;top:1269.32px;font-size:27.5px;font-weight:normal;color:#2b5be8;letter-spacing:0.830px;line-height:0;white-space:nowrap;">2025-09-18 17:55:57</span>
<span style="position:absolute;left:1575.90px;top:1267.22px;font-size:27.5px;font-weight:normal;color:#111827;letter-spacing:1.169px;line-height:0;white-space:nowrap;">2025-09-18 20:00:00</span>
<span style="position:absolute;left:170.50px;top:1369.40px;font-size:28px;font-weight:bold;color:#2b5be8;letter-spacing:0.248px;line-height:0;white-space:nowrap;">example_branch_python_operator_decorator</span>
<div style="position:absolute;left:283.30px;top:1380.20px;width:17.00px;height:3.7px;background:#2b5be8"></div>
<div style="position:absolute;left:393.96px;top:1380.20px;width:17.00px;height:3.7px;background:#2b5be8"></div>
<div style="position:absolute;left:504.58px;top:1380.20px;width:17.00px;height:3.7px;background:#2b5be8"></div>
<div style="position:absolute;left:635.95px;top:1380.20px;width:17.00px;height:3.7px;background:#2b5be8"></div>
<span style="position:absolute;left:837.00px;top:1369.64px;font-size:25px;font-weight:normal;color:#1a1f2b;letter-spacing:-0.118px;line-height:0;white-space:nowrap;">example2, example</span>
<span style="position:absolute;left:171.50px;top:1429.82px;font-size:21px;font-weight:bold;color:#42566f;letter-spacing:-0.026px;line-height:0;white-space:nowrap;">Schedule</span>
<span style="position:absolute;left:873.50px;top:1429.82px;font-size:21px;font-weight:bold;color:#42566f;letter-spacing:-0.020px;line-height:0;white-space:nowrap;">Latest Run</span>
<span style="position:absolute;left:1575.50px;top:1429.82px;font-size:21px;font-weight:bold;color:#42566f;letter-spacing:0.022px;line-height:0;white-space:nowrap;">Next Run</span>
<span style="position:absolute;left:206.00px;top:1495.51px;font-size:24.5px;font-weight:normal;color:#111827;letter-spacing:0.619px;line-height:0;white-space:nowrap;">0 0 * * *</span>
<span style="position:absolute;left:874.00px;top:1497.57px;font-size:27.5px;font-weight:normal;color:#2b5be8;letter-spacing:0.830px;line-height:0;white-space:nowrap;">2025-09-18 17:55:54</span>
<span style="position:absolute;left:1575.90px;top:1495.47px;font-size:27.5px;font-weight:normal;color:#111827;letter-spacing:1.169px;line-height:0;white-space:nowrap;">2025-09-18 20:00:00</span>
<span style="position:absolute;left:170.50px;top:1597.65px;font-size:28px;font-weight:bold;color:#2b5be8;letter-spacing:0.206px;line-height:0;white-space:nowrap;">example_branch_labels</span>
<div style="position:absolute;left:283.01px;top:1608.45px;width:17.00px;height:3.7px;background:#2b5be8"></div>
<div style="position:absolute;left:393.38px;top:1608.45px;width:17.00px;height:3.7px;background:#2b5be8"></div>
<span style="position:absolute;left:171.50px;top:1658.07px;font-size:21px;font-weight:bold;color:#42566f;letter-spacing:-0.026px;line-height:0;white-space:nowrap;">Schedule</span>
<span style="position:absolute;left:873.50px;top:1658.07px;font-size:21px;font-weight:bold;color:#42566f;letter-spacing:-0.020px;line-height:0;white-space:nowrap;">Latest Run</span>
<span style="position:absolute;left:1575.50px;top:1658.07px;font-size:21px;font-weight:bold;color:#42566f;letter-spacing:0.022px;line-height:0;white-space:nowrap;">Next Run</span>
<span style="position:absolute;left:874.00px;top:1725.82px;font-size:27.5px;font-weight:normal;color:#2b5be8;letter-spacing:0.830px;line-height:0;white-space:nowrap;">2025-09-18 17:55:50</span>
</div>
</body></html>
